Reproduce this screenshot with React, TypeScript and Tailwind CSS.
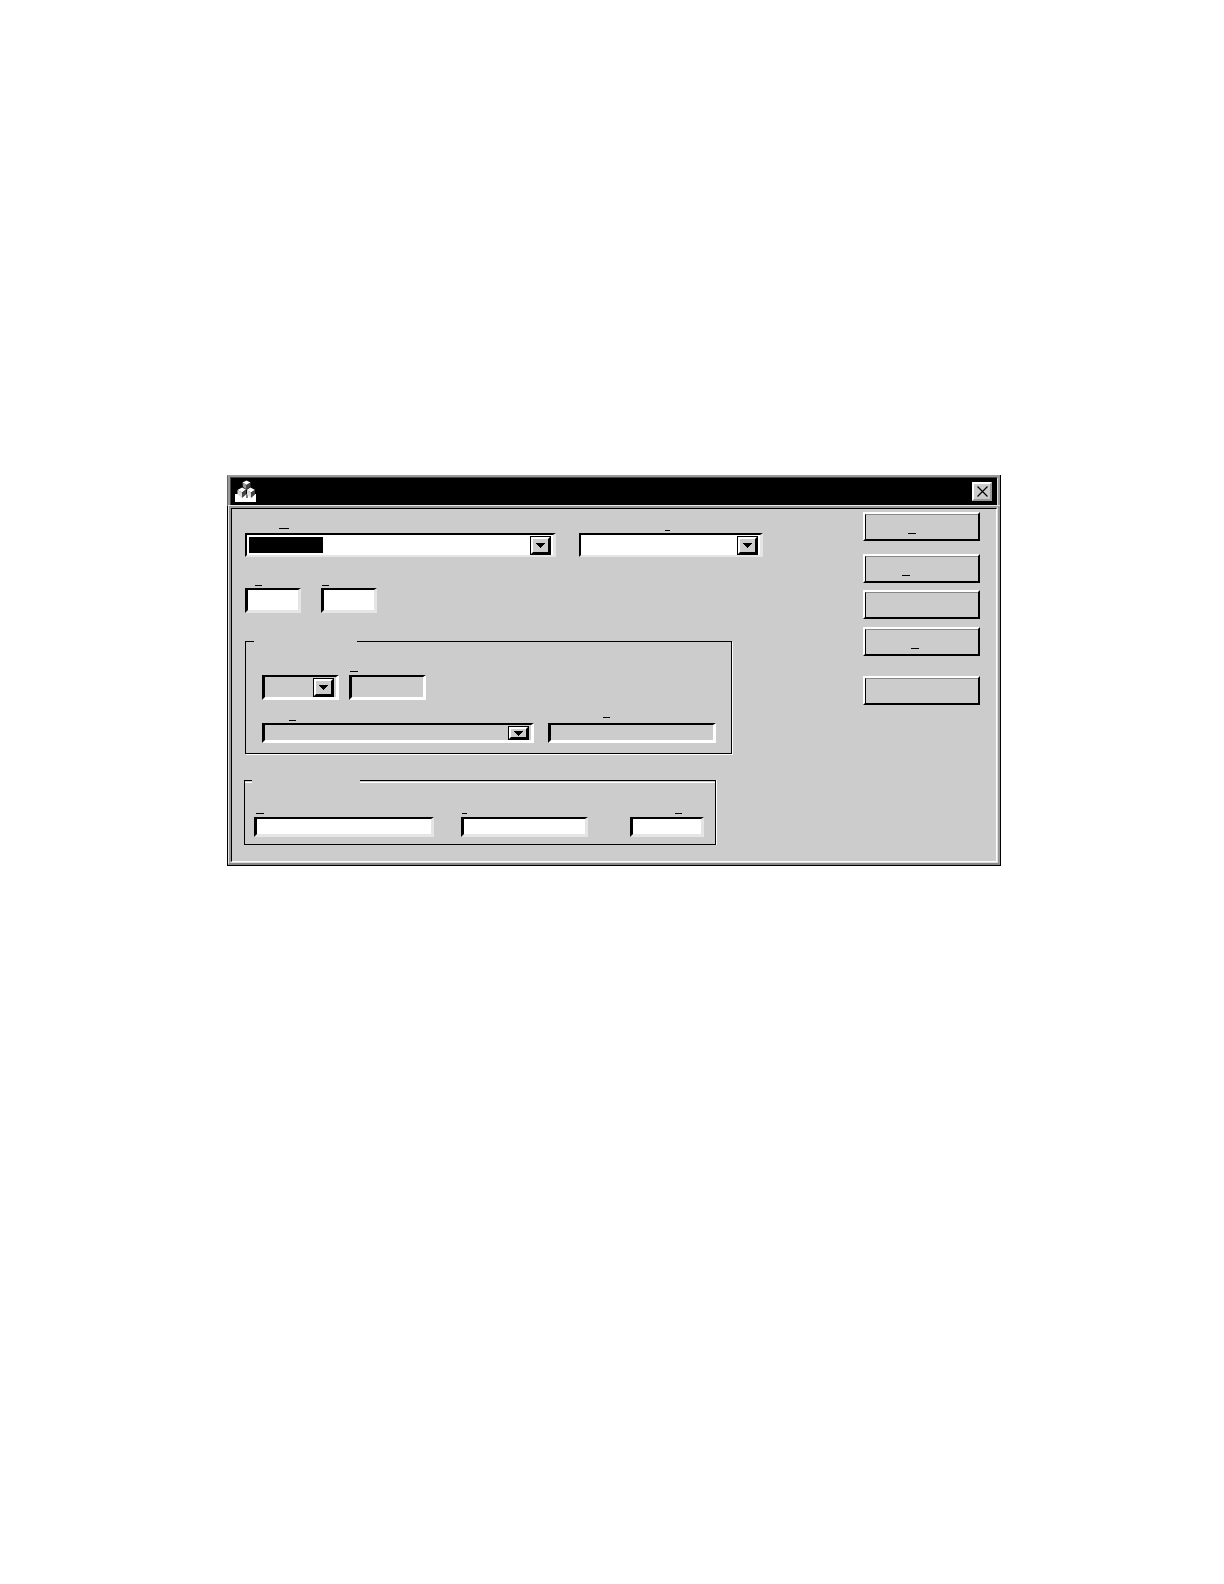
import type { ReactNode } from 'react'
import { clsx } from 'clsx'

interface FieldProps {
  id: string
  name: string
  width: string
  // space above the control and position of the access key mark
  label: string
  mark?: string
  children?: ReactNode
}

interface ControlProps extends FieldProps {
  control: string
}

function Mark({ className }: { className: string }) {
  return <span className={clsx('block h-px bg-black', className)} />
}

function Field({ id, width, label, mark, children }: FieldProps) {
  return (
    <div className={clsx('flex flex-col', width)}>
      <label htmlFor={id} className={clsx('flex items-end', label)}>
        {mark && <Mark className={mark} />}
      </label>
      {children}
    </div>
  )
}

function TextField({ control, ...field }: ControlProps) {
  return (
    <Field {...field}>
      <input
        id={field.id}
        type="text"
        aria-label={field.name}
        className={clsx(
          'w-full border-t-2 border-r-3 border-b-3 border-l-3 border-t-black border-l-black px-1 text-sm focus:outline-none',
          control,
        )}
      />
    </Field>
  )
}

function ComboField({ control, selected = false, ...field }: ControlProps & { selected?: boolean }) {
  return (
    <Field {...field}>
      <div className={clsx('grid grid-rows-1 border-t-2 border-r-3 border-t-black border-l-black', control)}>
        <select
          id={field.id}
          aria-label={field.name}
          className="col-start-1 row-start-1 h-full w-full appearance-none bg-transparent focus:outline-none"
        >
          <option value="" />
        </select>
        <div className="pointer-events-none col-start-1 row-start-1 flex justify-end pt-px pr-0.5 pl-0.5">
          {selected && <span className="mt-px mr-auto h-4 w-[74px] bg-black" />}
          <span className="flex w-[21px] border border-black">
            <span className="flex flex-1 items-center justify-center border-2 border-t-white border-r-black border-b-black border-l-white bg-[#ccc]">
              <svg width="9" height="5" viewBox="0 0 9 5" shapeRendering="crispEdges">
                <path d="M0 0h9v1h-1v1h-1v1h-1v1h-1v1h-1v-1h-1v-1h-1v-1h-1v-1h-1z" fill="#000" />
              </svg>
            </span>
          </span>
        </div>
      </div>
    </Field>
  )
}

function AppIcon() {
  return (
    <svg width="21" height="23" viewBox="0 0 21 23">
      <path d="M0 14h21v8H0z" fill="#fff" />
      <path d="M11.500 12h1v6h-1z" fill="#000" />
      <path d="M7.500 2.500l4-2 4 2-4 2.500z" fill="#fff" />
      <path d="M7.500 2.500l4 2.500v4.500l-3.500-2.500z" fill="#999" />
      <path d="M11.500 5l4-2.500v4.500l-4 2.500z" fill="#444" />
      <path d="M2.500 10l4.500-2.500 4 2-4 3z" fill="#fff" />
      <path d="M2.500 10l4.500 2.500v5.500l-4.500-3.500z" fill="#ddd" />
      <path d="M7 12.500l4-3v5l-4 3.500z" fill="#444" />
      <path d="M11.500 10l4-2.500 4.500 2.500-4 2.500z" fill="#fff" />
      <path d="M12 10l4 2.500v5.500l-4-3.500z" fill="#ddd" />
      <path d="M16 12.500l4-2.500v4.500l-4 3.500z" fill="#444" />
    </svg>
  )
}

const ACTIONS = [
  { name: 'Action 1', margin: 'mt-0', mark: 'ml-[42px] mt-[18px] w-2' },
  { name: 'Action 2', margin: 'mt-[13px]', mark: 'ml-9 mt-[18px] w-2' },
  { name: 'Action 3', margin: 'mt-[7px]', mark: '' },
  { name: 'Action 4', margin: 'mt-2', mark: 'ml-[45px] mt-[18px] w-2' },
  { name: 'Action 5', margin: 'mt-5', mark: '' },
]

const WHITE_BOX = 'border-r-[#e5e5e5] border-b-[#e5e5e5] bg-white'
const GRAY_BOX = 'border-r-white border-b-white bg-[#ccc]'

function TitleBar() {
  return (
    <header className="border-t border-l border-t-[#999] border-l-[#666]">
      <div className="border-t border-r-2 border-l-2 border-[#999]">
        <div className="border-t border-r border-l border-t-[#444] border-r-[#ddd] border-l-[#444]">
          <div className="flex h-[27px] items-center justify-between bg-black pr-[5px] pl-1">
            <AppIcon />
            <button
              type="button"
              aria-label="Close"
              className="flex h-[19px] w-5 items-center justify-center border-2 border-t-white border-r-[#999] border-b-[#999] border-l-white bg-[#ccc]"
            >
              <svg width="11" height="11" viewBox="0 0 11 11">
                <path d="M.5.5l10 10M10.500.5l-10 10" stroke="#000" strokeWidth="1.200" />
              </svg>
            </button>
          </div>
        </div>
      </div>
    </header>
  )
}

function Form() {
  return (
    <div className="flex flex-1 flex-col pb-4">
      <div className="flex items-end gap-[23px] pl-[13px]">
        <ComboField
          id="name"
          name="Name"
          width="w-[311px]"
          label="h-6 pb-1"
          mark="ml-[34px] w-2.5"
          control={clsx('h-6 border-b-2 border-l-2', WHITE_BOX)}
          selected
        />
        <ComboField
          id="type"
          name="Type"
          width="w-[184px]"
          label="h-6 pb-0.5"
          mark="ml-[86px] w-[5px]"
          control={clsx('h-6 border-b-2 border-l-2', WHITE_BOX)}
        />
      </div>

      <div className="flex gap-5 pl-[13px]">
        <TextField id="first" name="First" width="w-14" label="h-[31px] pb-0.5" mark="ml-2.5 w-[7px]" control={clsx('h-[25px]', WHITE_BOX)} />
        <TextField id="second" name="Second" width="w-14" label="h-[31px] pb-0.5" mark="ml-px w-[7px]" control={clsx('h-[25px]', WHITE_BOX)} />
      </div>

      <fieldset className="mt-[26px] ml-[13px] w-[487px] border border-black pb-2.5 shadow-[1px_1px_0_white]">
        <legend className="ml-2 h-[5px] w-[103px] bg-[#ccc]" />
        <div className="flex gap-2.5 pl-4">
          <ComboField id="unit" name="Unit" width="w-[77px]" label="h-[31px]" control={clsx('h-[25px] border-b-3 border-l-3', GRAY_BOX)} />
          <TextField id="value" name="Value" width="w-[77px]" label="h-[31px] pb-[3px]" mark="ml-px w-2" control={clsx('h-[25px]', GRAY_BOX)} />
        </div>
        <div className="flex gap-3.5 pl-4">
          <ComboField
            id="source"
            name="Source"
            width="w-[272px]"
            label="h-[23px] pb-0.5"
            mark="ml-[27px] w-[7px]"
            control={clsx('h-5 border-b-3 border-l-3', GRAY_BOX)}
          />
          <TextField id="detail" name="Detail" width="w-[168px]" label="h-[23px] pb-[5px]" mark="ml-[55px] w-[7px]" control={clsx('h-5', GRAY_BOX)} />
        </div>
      </fieldset>

      <fieldset className="mt-6 ml-3 w-[472px] border border-black pb-[7px] shadow-[1px_0_0_white,inset_0_1px_0_#ccc,inset_0_2px_0_white]">
        <legend className="ml-[7px] h-[5px] w-[108px] bg-[#ccc]" />
        <div className="flex pl-[9px]">
          <TextField id="left" name="Left" width="w-[180px]" label="h-[34px] pb-[3px]" mark="ml-0.5 w-2" control={clsx('h-5', WHITE_BOX)} />
          <div className="ml-[27px] flex gap-[42px]">
            <TextField id="middle" name="Middle" width="w-[127px]" label="h-[34px] pb-[3px]" mark="ml-px w-[5px]" control={clsx('h-5', WHITE_BOX)} />
            <TextField id="right" name="Right" width="w-[74px]" label="h-[34px] pb-[3px]" mark="ml-[45px] w-[7px]" control={clsx('h-5', WHITE_BOX)} />
          </div>
        </div>
      </fieldset>
    </div>
  )
}

function Actions() {
  return (
    <div className="flex w-[133px] flex-col pt-[3px] pr-4">
      {ACTIONS.map(({ name, margin, mark }) => (
        <button
          key={name}
          type="button"
          aria-label={name}
          className={clsx('flex h-[29px] border-2 border-t-white border-r-black border-b-black border-l-white', margin)}
        >
          <span className="flex h-full w-full items-start border-t border-l border-t-[#888] border-l-black">
            {mark && <Mark className={mark} />}
          </span>
        </button>
      ))}
    </div>
  )
}

export default function App() {
  return (
    <main className="min-h-screen bg-white pt-[475px] pl-1 font-['Liberation_Sans',sans-serif]">
      <div role="dialog" aria-label="Dialog" className="mx-auto w-full max-w-[774px] border-r border-b border-black">
        <TitleBar />
        <div className="border-t border-l border-t-[#e5e5e5] border-l-black">
          <div className="border-r-2 border-b-2 border-l border-r-[#999] border-b-[#888] border-l-[#e5e5e5]">
            <div className="border-t-2 border-r border-b border-l-2 border-t-[#999] border-r-[#ddd] border-b-[#ddd] border-l-[#999]">
              <div className="flex border border-t-black border-r-white border-b-white border-l-black bg-[#ccc]">
                <Form />
                <Actions />
              </div>
            </div>
          </div>
        </div>
      </div>
    </main>
  )
}
